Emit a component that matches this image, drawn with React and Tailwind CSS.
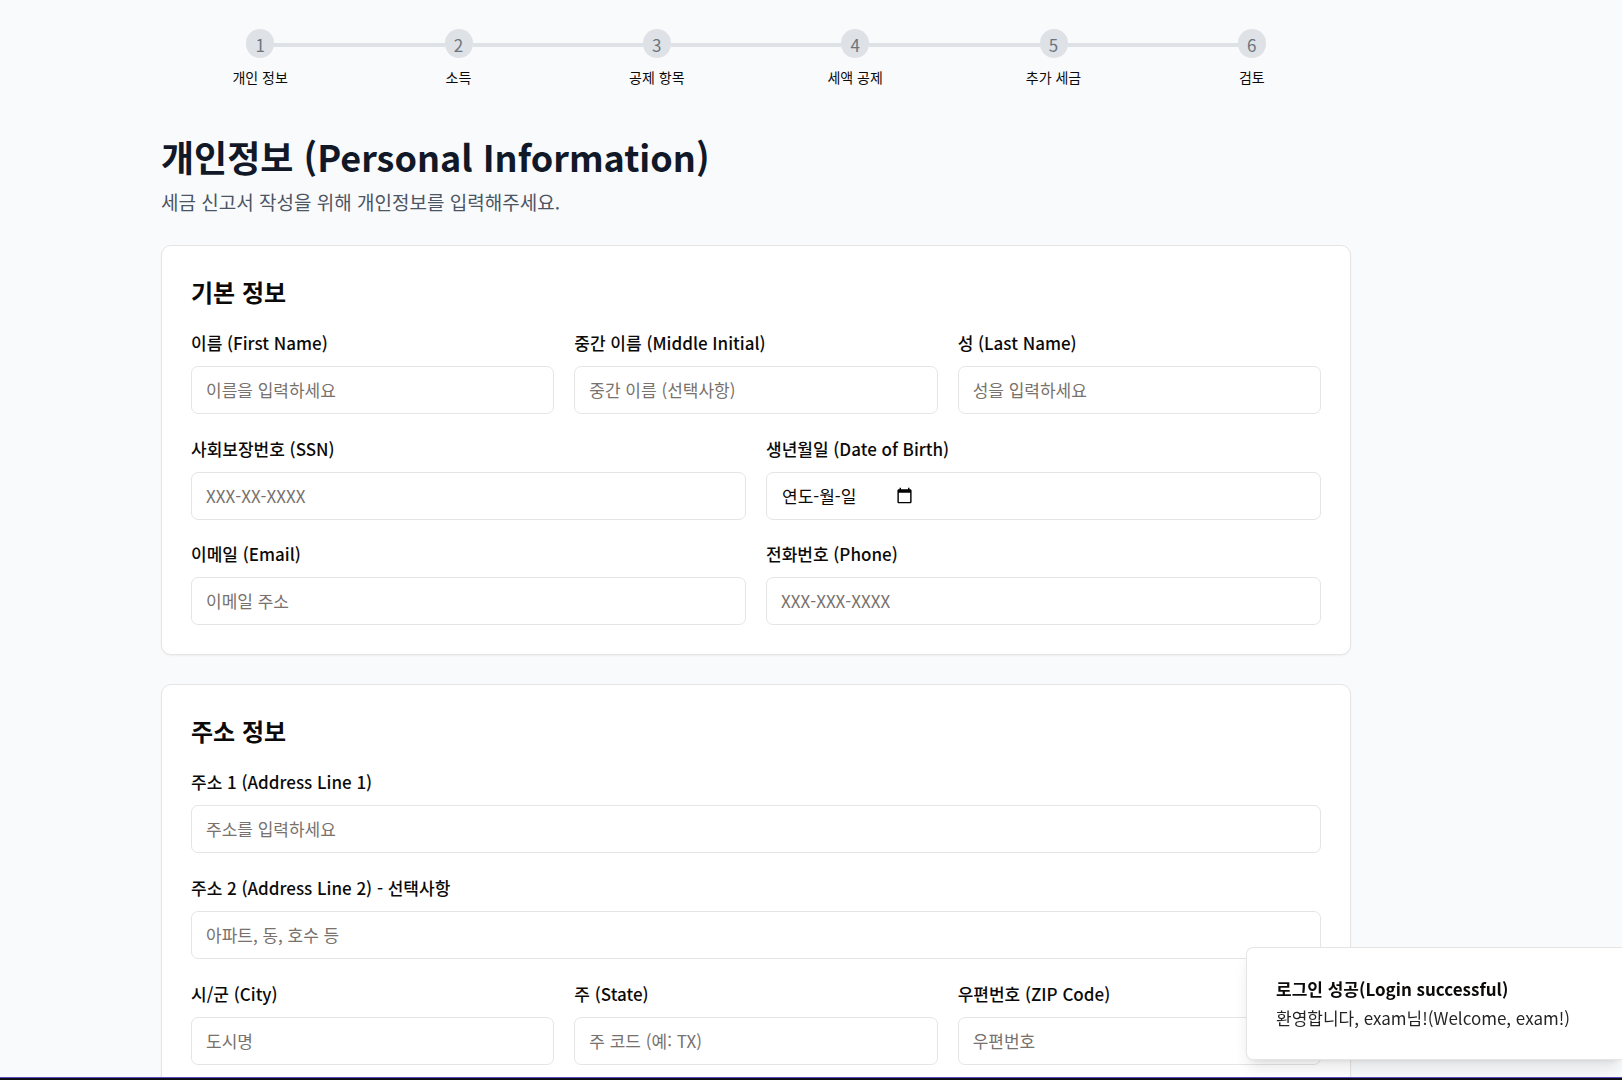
import React from "react";

const steps = ["개인 정보", "소득", "공제 항목", "세액 공제", "추가 세금", "검토"];

function Field({ id, label, children }) {
  return (
    <div>
      <label htmlFor={id} className="block text-[17px] leading-[29px] font-medium">
        {label}
      </label>
      <div className="mt-[9px]">{children}</div>
    </div>
  );
}

function TextField({ id, label, placeholder, type = "text" }) {
  return (
    <Field id={id} label={label}>
      <input
        id={id}
        type={type}
        placeholder={placeholder}
        className="block h-12 w-full rounded-[7px] border border-[#e7e5e4] bg-white px-[14px] pb-0.5 text-[17px] placeholder:text-[#78716c]"
      />
    </Field>
  );
}

function DateField({ id, label, placeholder }) {
  return (
    <Field id={id} label={label}>
      <div className="flex h-12 items-center rounded-[7px] border border-[#e7e5e4] bg-white px-[15px]">
        <input
          id={id}
          type="text"
          placeholder={placeholder}
          className="w-[114px] bg-transparent text-[17px] outline-none placeholder:text-[#0c0a09]"
        />
        <button type="button" aria-label="달력 열기" className="pb-0.5 text-black">
          <svg width="17" height="17" viewBox="0 0 24 24" fill="currentColor" aria-hidden="true">
            <path d="M20 3h-1V1h-2v2H7V1H5v2H4c-1.100 0-2 .9-2 2v16c0 1.100.9 2 2 2h16c1.100 0 2-.9 2-2V5c0-1.100-.9-2-2-2zm0 18H4V8h16v13z" />
          </svg>
        </button>
      </div>
    </Field>
  );
}

function Card({ title, children }) {
  return (
    <section className="rounded-[10px] border border-[#e7e5e4] bg-white p-[29px] shadow-xs">
      <h2 className="mb-[19px] text-2xl leading-[34px] font-semibold">{title}</h2>
      <div className="flex flex-col gap-5">{children}</div>
    </section>
  );
}

export default function App() {
  return (
    <div
      lang="ko"
      className="h-screen overflow-hidden bg-[#f9fafc] font-['Noto_Sans_CJK_KR',sans-serif] text-[#0c0a09]"
    >
      <main className="mr-[271px] ml-[161px] pt-[29px]">
        <ol className="grid grid-cols-6">
          {steps.map((name, i) => (
            <li key={name} className="flex flex-col items-center">
              <div className="flex w-full items-center">
                <span className={i === 0 ? "mt-0.5 h-1 flex-1" : "mt-0.5 h-1 flex-1 bg-[#dee2e6]"} />
                <span className="flex h-[29px] w-7 items-center justify-center rounded-full bg-[#dee2e6] pt-0.5 text-[17px] leading-5 text-[#6c757d]">
                  {i + 1}
                </span>
                <span
                  className={i === steps.length - 1 ? "mt-0.5 h-1 flex-1" : "mt-0.5 h-1 flex-1 bg-[#dee2e6]"}
                />
              </div>
              <span className="mt-[9px] text-sm leading-5">{name}</span>
            </li>
          ))}
        </ol>

        <h1 className="mt-12 text-4xl leading-[43px] font-bold text-[#111827]">
          개인정보 (Personal Information)
        </h1>
        <p className="mt-[9px] text-[19px] leading-[29px] text-[#4b5563]">
          세금 신고서 작성을 위해 개인정보를 입력해주세요.
        </p>

        <form className="mt-[29px] flex flex-col gap-[29px]">
          <Card title="기본 정보">
            <div className="grid grid-cols-3 gap-5">
              <TextField id="first" label="이름 (First Name)" placeholder="이름을 입력하세요" />
              <TextField id="middle" label="중간 이름 (Middle Initial)" placeholder="중간 이름 (선택사항)" />
              <TextField id="last" label="성 (Last Name)" placeholder="성을 입력하세요" />
            </div>
            <div className="grid grid-cols-2 gap-x-5 gap-y-[19px]">
              <TextField id="ssn" label="사회보장번호 (SSN)" placeholder="XXX-XX-XXXX" />
              <DateField id="dob" label="생년월일 (Date of Birth)" placeholder="연도-월-일" />
              <TextField id="email" type="email" label="이메일 (Email)" placeholder="이메일 주소" />
              <TextField id="phone" type="tel" label="전화번호 (Phone)" placeholder="XXX-XXX-XXXX" />
            </div>
          </Card>

          <Card title="주소 정보">
            <TextField id="address1" label="주소 1 (Address Line 1)" placeholder="주소를 입력하세요" />
            <TextField id="address2" label="주소 2 (Address Line 2) - 선택사항" placeholder="아파트, 동, 호수 등" />
            <div className="grid grid-cols-3 gap-5">
              <TextField id="city" label="시/군 (City)" placeholder="도시명" />
              <TextField id="state" label="주 (State)" placeholder="주 코드 (예: TX)" />
              <TextField id="zip" label="우편번호 (ZIP Code)" placeholder="우편번호" />
            </div>
          </Card>
        </form>
      </main>

      <div
        role="status"
        className="fixed right-0 bottom-5 w-[376px] rounded-l-[7px] border border-r-0 border-[#e7e5e4] bg-white pt-[26px] pb-[27px] pl-[29px] shadow-lg"
      >
        <p className="text-[17px] leading-[29px] font-semibold">로그인 성공(Login successful)</p>
        <p className="text-[17px] leading-[29px] opacity-90">환영합니다, exam님!(Welcome, exam!)</p>
      </div>
      <div className="fixed inset-x-0 bottom-0 h-[3px] border-t border-[#5b4bc4] bg-[#0d0d14]" />
    </div>
  );
}
